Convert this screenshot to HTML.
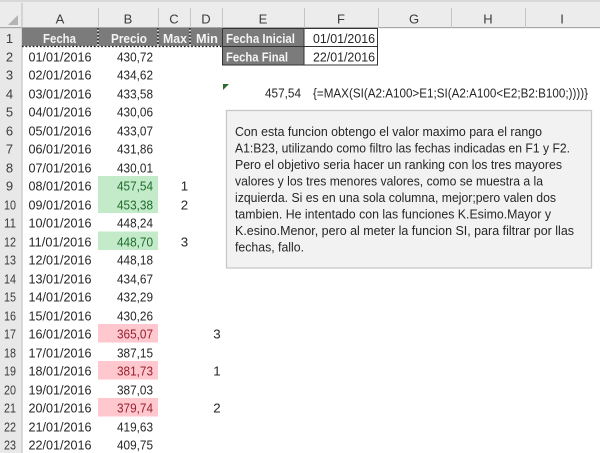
<!DOCTYPE html>
<html><head><meta charset="utf-8"><style>
html,body{margin:0;padding:0;background:#fff;width:600px;height:453px;overflow:hidden}
svg{display:block;filter:blur(.3px)}
text{font-family:"Liberation Sans",sans-serif;font-size:13.3px;fill:#262626}
.h{fill:#3c3c3c;font-size:13px}
.b{fill:#f4f4f4;font-weight:bold;font-size:13.3px}
.g{fill:#1f6b2c}.r{fill:#96202e}
.t{font-size:13.3px;fill:#262626}
</style></head><body>
<svg width="600" height="453" viewBox="0 0 600 453" xmlns="http://www.w3.org/2000/svg">
<rect width="600" height="453" fill="#fff"/>
<rect x="0" y="0" width="600" height="2" fill="#d8d8d8"/>
<rect x="0" y="2" width="600" height="26" fill="#ececec"/>
<rect x="0" y="28" width="22" height="425" fill="#e8e8e8"/>
<rect x="0" y="27" width="600" height="1.2" fill="#a8a8a8"/>
<rect x="21.5" y="3" width="1" height="450" fill="#bdbdbd"/>
<polygon points="18,15 18,25 8,25" fill="#b4b4b4"/>
<g fill="#c4c4c4"><rect x="98" y="8" width="1" height="20"/><rect x="158" y="8" width="1" height="20"/><rect x="190" y="8" width="1" height="20"/><rect x="222" y="8" width="1" height="20"/><rect x="304" y="8" width="1" height="20"/><rect x="378" y="8" width="1" height="20"/><rect x="451" y="8" width="1" height="20"/><rect x="525" y="8" width="1" height="20"/></g>

<rect x="22" y="28" width="200" height="18.5" fill="#7b7b7b"/>
<rect x="222" y="28" width="82" height="37" fill="#7b7b7b"/>
<path d="M22 46.5H222M98 28V46.5M158 28V46.5M190 28V46.5" stroke="#111" stroke-width="1.3" stroke-dasharray="2 1.6" fill="none"/>
<path d="M98 28V46.5M158 28V46.5M190 28V46.5M22 46.5H222" stroke="#fff" stroke-width="1.3" stroke-dasharray="1.6 2" stroke-dashoffset="2" fill="none"/>
<rect x="222.5" y="28.5" width="155" height="36.5" fill="none" stroke="#333" stroke-width="1"/>
<path d="M222 46.5H378M304 28V65" stroke="#333" stroke-width="1" fill="none"/>

<rect x="98" y="176" width="60" height="37" fill="#c3ebc9"/>
<rect x="98" y="231.5" width="60" height="18.5" fill="#c3ebc9"/>
<rect x="98" y="324" width="60" height="18.5" fill="#ffc7ce"/>
<rect x="98" y="361" width="60" height="18.5" fill="#ffc7ce"/>
<rect x="98" y="398" width="60" height="18.5" fill="#ffc7ce"/>

<g text-anchor="middle">
<text class="h" x="60" y="23.500">A</text><text class="h" x="128" y="23.500">B</text><text class="h" x="174" y="23.500">C</text><text class="h" x="206" y="23.500">D</text><text class="h" x="263" y="23.500">E</text><text class="h" x="341" y="23.500">F</text><text class="h" x="414" y="23.500">G</text><text class="h" x="488" y="23.500">H</text><text class="h" x="562" y="23.500">I</text>
</g>
<g text-anchor="middle">
<text class="h" x="9.500" y="43">1</text><text class="h" x="9.500" y="61.500">2</text><text class="h" x="9.500" y="79.500">3</text><text class="h" x="9.500" y="98.500">4</text><text class="h" x="9.500" y="116.500">5</text><text class="h" x="9.500" y="135.500">6</text><text class="h" x="9.500" y="153.500">7</text><text class="h" x="9.500" y="172.500">8</text><text class="h" x="9.500" y="190.500">9</text>
<text class="h" x="10" y="209.500" textLength="12" lengthAdjust="spacingAndGlyphs">10</text><text class="h" x="10" y="227.500" textLength="12" lengthAdjust="spacingAndGlyphs">11</text><text class="h" x="10" y="246.500" textLength="12" lengthAdjust="spacingAndGlyphs">12</text><text class="h" x="10" y="264.500" textLength="12" lengthAdjust="spacingAndGlyphs">13</text><text class="h" x="10" y="283.500" textLength="12" lengthAdjust="spacingAndGlyphs">14</text><text class="h" x="10" y="301.500" textLength="12" lengthAdjust="spacingAndGlyphs">15</text><text class="h" x="10" y="320.500" textLength="12" lengthAdjust="spacingAndGlyphs">16</text><text class="h" x="10" y="338.500" textLength="12" lengthAdjust="spacingAndGlyphs">17</text><text class="h" x="10" y="357.500" textLength="12" lengthAdjust="spacingAndGlyphs">18</text><text class="h" x="10" y="375.500" textLength="12" lengthAdjust="spacingAndGlyphs">19</text><text class="h" x="10" y="394.500" textLength="12" lengthAdjust="spacingAndGlyphs">20</text><text class="h" x="10" y="412.500" textLength="12" lengthAdjust="spacingAndGlyphs">21</text><text class="h" x="10" y="431.500" textLength="12" lengthAdjust="spacingAndGlyphs">22</text><text class="h" x="10" y="449.500" textLength="12" lengthAdjust="spacingAndGlyphs">23</text>
</g>
<text class="b" x="43" y="43" textLength="33" lengthAdjust="spacingAndGlyphs">Fecha</text>
<text class="b" x="111" y="43" textLength="36" lengthAdjust="spacingAndGlyphs">Precio</text>
<text class="b" x="163" y="43" textLength="24" lengthAdjust="spacingAndGlyphs">Max</text>
<text class="b" x="196" y="43" textLength="22" lengthAdjust="spacingAndGlyphs">Min</text>
<text class="b" x="226" y="43" textLength="69" lengthAdjust="spacingAndGlyphs">Fecha Inicial</text>
<text class="b" x="226" y="61.500" textLength="62" lengthAdjust="spacingAndGlyphs">Fecha Final</text>
<text x="313" y="43" textLength="62" lengthAdjust="spacingAndGlyphs">01/01/2016</text>
<text x="313" y="61.500" textLength="62" lengthAdjust="spacingAndGlyphs">22/01/2016</text>

<g>
<text x="28.500" y="61.500" textLength="63" lengthAdjust="spacingAndGlyphs">01/01/2016</text>
<text x="28.500" y="79.500" textLength="63" lengthAdjust="spacingAndGlyphs">02/01/2016</text>
<text x="28.500" y="98.500" textLength="63" lengthAdjust="spacingAndGlyphs">03/01/2016</text>
<text x="28.500" y="116.500" textLength="63" lengthAdjust="spacingAndGlyphs">04/01/2016</text>
<text x="28.500" y="135.500" textLength="63" lengthAdjust="spacingAndGlyphs">05/01/2016</text>
<text x="28.500" y="153.500" textLength="63" lengthAdjust="spacingAndGlyphs">06/01/2016</text>
<text x="28.500" y="172.500" textLength="63" lengthAdjust="spacingAndGlyphs">07/01/2016</text>
<text x="28.500" y="190.500" textLength="63" lengthAdjust="spacingAndGlyphs">08/01/2016</text>
<text x="28.500" y="209.500" textLength="63" lengthAdjust="spacingAndGlyphs">09/01/2016</text>
<text x="28.500" y="227.500" textLength="63" lengthAdjust="spacingAndGlyphs">10/01/2016</text>
<text x="28.500" y="246.500" textLength="63" lengthAdjust="spacingAndGlyphs">11/01/2016</text>
<text x="28.500" y="264.500" textLength="63" lengthAdjust="spacingAndGlyphs">12/01/2016</text>
<text x="28.500" y="283.500" textLength="63" lengthAdjust="spacingAndGlyphs">13/01/2016</text>
<text x="28.500" y="301.500" textLength="63" lengthAdjust="spacingAndGlyphs">14/01/2016</text>
<text x="28.500" y="320.500" textLength="63" lengthAdjust="spacingAndGlyphs">15/01/2016</text>
<text x="28.500" y="338.500" textLength="63" lengthAdjust="spacingAndGlyphs">16/01/2016</text>
<text x="28.500" y="357.500" textLength="63" lengthAdjust="spacingAndGlyphs">17/01/2016</text>
<text x="28.500" y="375.500" textLength="63" lengthAdjust="spacingAndGlyphs">18/01/2016</text>
<text x="28.500" y="394.500" textLength="63" lengthAdjust="spacingAndGlyphs">19/01/2016</text>
<text x="28.500" y="412.500" textLength="63" lengthAdjust="spacingAndGlyphs">20/01/2016</text>
<text x="28.500" y="431.500" textLength="63" lengthAdjust="spacingAndGlyphs">21/01/2016</text>
<text x="28.500" y="449.500" textLength="63" lengthAdjust="spacingAndGlyphs">22/01/2016</text>
</g>
<g>
<text x="117" y="61.500" textLength="36" lengthAdjust="spacingAndGlyphs">430,72</text>
<text x="117" y="79.500" textLength="36" lengthAdjust="spacingAndGlyphs">434,62</text>
<text x="117" y="98.500" textLength="36" lengthAdjust="spacingAndGlyphs">433,58</text>
<text x="117" y="116.500" textLength="36" lengthAdjust="spacingAndGlyphs">430,06</text>
<text x="117" y="135.500" textLength="36" lengthAdjust="spacingAndGlyphs">433,07</text>
<text x="117" y="153.500" textLength="36" lengthAdjust="spacingAndGlyphs">431,86</text>
<text x="117" y="172.500" textLength="36" lengthAdjust="spacingAndGlyphs">430,01</text>
<text class="g" x="117" y="190.500" textLength="36" lengthAdjust="spacingAndGlyphs">457,54</text>
<text class="g" x="117" y="209.500" textLength="36" lengthAdjust="spacingAndGlyphs">453,38</text>
<text x="117" y="227.500" textLength="36" lengthAdjust="spacingAndGlyphs">448,24</text>
<text class="g" x="117" y="246.500" textLength="36" lengthAdjust="spacingAndGlyphs">448,70</text>
<text x="117" y="264.500" textLength="36" lengthAdjust="spacingAndGlyphs">448,18</text>
<text x="117" y="283.500" textLength="36" lengthAdjust="spacingAndGlyphs">434,67</text>
<text x="117" y="301.500" textLength="36" lengthAdjust="spacingAndGlyphs">432,29</text>
<text x="117" y="320.500" textLength="36" lengthAdjust="spacingAndGlyphs">430,26</text>
<text class="r" x="117" y="338.500" textLength="36" lengthAdjust="spacingAndGlyphs">365,07</text>
<text x="117" y="357.500" textLength="36" lengthAdjust="spacingAndGlyphs">387,15</text>
<text class="r" x="117" y="375.500" textLength="36" lengthAdjust="spacingAndGlyphs">381,73</text>
<text x="117" y="394.500" textLength="36" lengthAdjust="spacingAndGlyphs">387,03</text>
<text class="r" x="117" y="412.500" textLength="36" lengthAdjust="spacingAndGlyphs">379,74</text>
<text x="117" y="431.500" textLength="36" lengthAdjust="spacingAndGlyphs">419,63</text>
<text x="117" y="449.500" textLength="36" lengthAdjust="spacingAndGlyphs">409,75</text>
</g>
<g text-anchor="middle">
<text x="184.500" y="190.500">1</text><text x="184.500" y="209.500">2</text><text x="184.500" y="246.500">3</text>
<text x="217" y="338.500">3</text><text x="217" y="375.500">1</text><text x="217" y="412.500">2</text>
</g>

<polygon points="223,84 229,84 223,90" fill="#2f6b2f"/>
<text x="265" y="97.500" textLength="36" lengthAdjust="spacingAndGlyphs">457,54</text>
<text x="313" y="97.500" textLength="275" lengthAdjust="spacingAndGlyphs">{=MAX(SI(A2:A100&gt;E1;SI(A2:A100&lt;E2;B2:B100;))))}</text>

<rect x="226.500" y="110.500" width="365" height="157.500" fill="#f2f2f2" stroke="#c8c8c8" stroke-width="1.300"/>
<text class="t" x="235" y="136" textLength="307" lengthAdjust="spacingAndGlyphs">Con esta funcion obtengo el valor maximo para el rango</text>
<text class="t" x="235" y="152.500" textLength="335" lengthAdjust="spacingAndGlyphs">A1:B23, utilizando como filtro las fechas indicadas en F1 y F2.</text>
<text class="t" x="235" y="169" textLength="327" lengthAdjust="spacingAndGlyphs">Pero el objetivo seria hacer un ranking con los tres mayores</text>
<text class="t" x="235" y="185.500" textLength="308" lengthAdjust="spacingAndGlyphs">valores y los tres menores valores, como se muestra a la</text>
<text class="t" x="235" y="202" textLength="321" lengthAdjust="spacingAndGlyphs">izquierda. Si es en una sola columna, mejor;pero valen dos</text>
<text class="t" x="235" y="218.500" textLength="316" lengthAdjust="spacingAndGlyphs">tambien. He intentado con las funciones K.Esimo.Mayor y</text>
<text class="t" x="235" y="235" textLength="339" lengthAdjust="spacingAndGlyphs">K.esino.Menor, pero al meter la funcion SI, para filtrar por llas</text>
<text class="t" x="235" y="251.500" textLength="69" lengthAdjust="spacingAndGlyphs">fechas, fallo.</text>
</svg>
</body></html>
